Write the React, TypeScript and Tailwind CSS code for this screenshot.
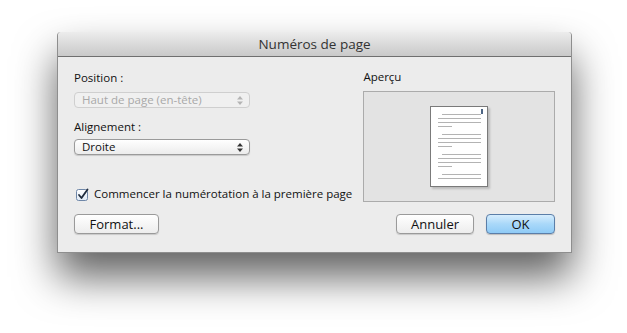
import React from "react";

const font = { fontFamily: '"Open Sans", "DejaVu Sans", sans-serif' };

function Arrows({ disabled }: { disabled?: boolean }) {
  const c = disabled ? "#b4b4b4" : "#333";
  return (
    <svg width="6" height="9" viewBox="0 0 6 9">
      <path d="M3 0 L6 3.5 L0 3.5 Z" fill={c} />
      <path d="M0 5.5 L6 5.5 L3 9 Z" fill={c} />
    </svg>
  );
}

function Popup({ label, disabled }: { label: string; disabled?: boolean }) {
  return (
    <div
      className={`flex h-[16px] w-[176px] items-center justify-between rounded-[4px] border pl-[7px] pr-[6px] text-[11.5px] leading-none ${
        disabled
          ? "border-[#cfcfcf] bg-[#f0f0f0] text-[#a8a8a8]"
          : "border-[#9a9a9a] bg-gradient-to-b from-[#ffffff] to-[#ececec] text-[#111] shadow-[0_1px_1px_rgba(0,0,0,0.15)]"
      }`}
    >
      <span>{label}</span>
      <Arrows disabled={disabled} />
    </div>
  );
}

function PagePreview() {
  const groups = [113, 133, 153];
  return (
    <div className="h-[81px] w-[58px] border border-[#7a7a7a] bg-white shadow-[2px_2px_2px_rgba(0,0,0,0.18)]">
      <svg width="56" height="79" viewBox="431 106 56 79" className="block">
        <rect x="481" y="108" width="2" height="5" fill="#4d6584" />
        {groups.map((y) => (
          <g key={y} stroke="#b3b3b3" strokeWidth="1">
            <line x1="442" y1={y + 0.5} x2="481" y2={y + 0.5} />
            <line x1="438" y1={y + 4.5} x2="481" y2={y + 4.5} />
            <line x1="438" y1={y + 8.5} x2="481" y2={y + 8.5} />
            <line x1="438" y1={y + 12.5} x2="452" y2={y + 12.5} />
          </g>
        ))}
        <g stroke="#b3b3b3" strokeWidth="1">
          <line x1="442" y1="173.5" x2="481" y2="173.5" />
          <line x1="438" y1="177.5" x2="481" y2="177.5" />
        </g>
      </svg>
    </div>
  );
}

function Button({ children, primary, width }: { children: React.ReactNode; primary?: boolean; width: string }) {
  return (
    <div
      className={`flex h-[20px] items-center justify-center rounded-[4px] border text-[13px] leading-none ${width} ${
        primary
          ? "border-[#5b7ea8] bg-gradient-to-b from-[#d6edfd] via-[#a9d8f9] to-[#8fcbf6] text-[#111] shadow-[0_1px_1px_rgba(0,0,0,0.2)]"
          : "border-[#9a9a9a] bg-gradient-to-b from-[#ffffff] to-[#ededed] text-[#111] shadow-[0_1px_1px_rgba(0,0,0,0.15)]"
      }`}
    >
      {children}
    </div>
  );
}

export default function App() {
  return (
    <div className="h-[333px] w-[627px] overflow-hidden bg-white pl-[57px] pt-[32px]" style={font}>
      <div className="w-[515px] rounded-t-[4px] border border-t-0 border-[#8e8e8e] bg-[#ececec] shadow-[0_24px_42px_rgba(0,0,0,0.62)]">
        {/* title bar */}
        <div className="flex h-[25px] items-center justify-center rounded-t-[4px] border-b border-[#6f6f6f] bg-gradient-to-b from-[#ececec] to-[#c9c9c9] text-[13.5px] text-[#333]">
          Numéros de page
        </div>

        <div className="px-[16px] pb-[18px] pt-[12px]">
          <div className="flex justify-between">
            <div className="flex w-[290px] flex-col pt-[1px] text-[11.5px] text-[#111]">
              <div className="h-[16px] leading-[16px]">Position :</div>
              <div className="mt-[6px]">
                <Popup label="Haut de page (en-tête)" disabled />
              </div>
              <div className="mt-[11px] h-[16px] leading-[16px]">Alignement :</div>
              <div className="mt-[4px]">
                <Popup label="Droite" />
              </div>
              <div className="mt-[31px] flex h-[16px] items-center gap-[5px] whitespace-nowrap">
                <svg width="13" height="13" viewBox="0 0 13 13" className="ml-[2px]">
                  <defs>
                    <linearGradient id="cb" x1="0" y1="0" x2="0" y2="1">
                      <stop offset="0" stopColor="#ffffff" />
                      <stop offset="1" stopColor="#dfe9f5" />
                    </linearGradient>
                  </defs>
                  <rect x="0.5" y="1.5" width="11" height="11" rx="2" fill="url(#cb)" stroke="#6f87a8" />
                  <path d="M3 7 L5.5 10 L11.5 1.5" fill="none" stroke="#1f2b3d" strokeWidth="1.8" strokeLinecap="round" strokeLinejoin="round" />
                </svg>
                <span className="leading-[16px]">Commencer la numérotation à la première page</span>
              </div>
            </div>

            <div className="flex w-[192px] flex-col text-[11.5px] text-[#111]">
              <div className="h-[16px] leading-[16px]">Aperçu</div>
              <div className="mt-[6px] flex h-[111px] items-start justify-center border border-[#ababab] bg-[#e3e3e3] pt-[14px]">
                <PagePreview />
              </div>
            </div>
          </div>

          <div className="mt-[12px] flex items-center justify-between">
            <Button width="w-[85px]">Format...</Button>
            <div className="flex gap-[12px]">
              <Button width="w-[78px]">Annuler</Button>
              <Button width="w-[69px]" primary>
                OK
              </Button>
            </div>
          </div>
        </div>
      </div>
    </div>
  );
}
